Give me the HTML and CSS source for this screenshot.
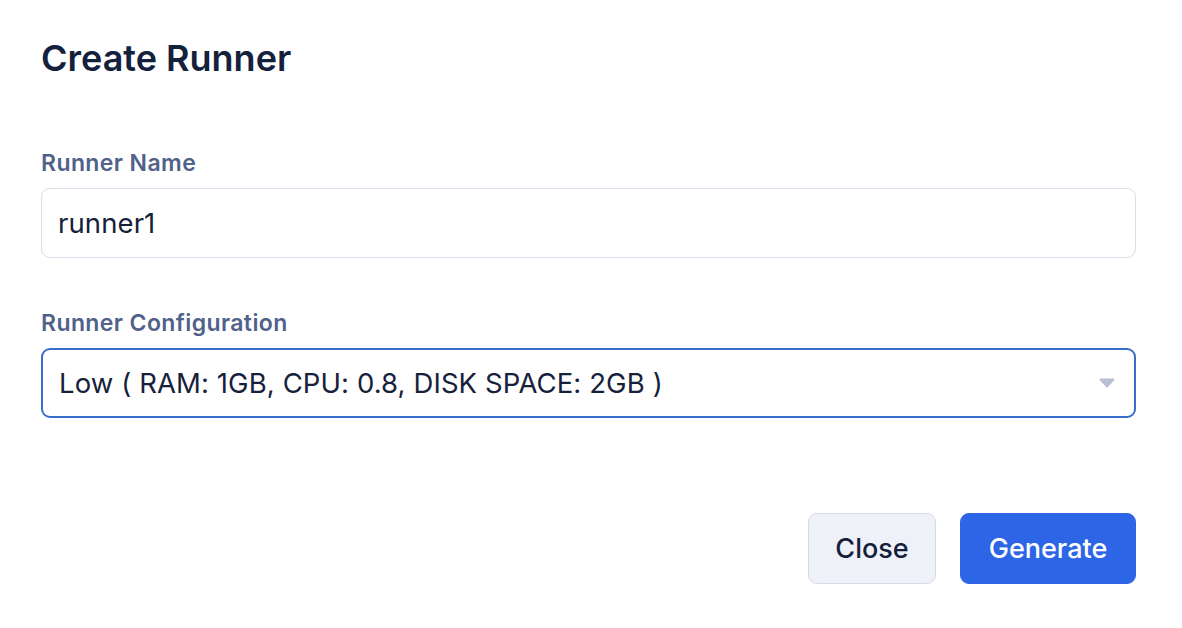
FILE: index.html
```html
<!DOCTYPE html>
<html lang="en">
<head>
<meta charset="utf-8">
<title>Create Runner</title>
<link rel="stylesheet" href="styles.css">
</head>
<body>
<div class="modal">
  <h1 class="title">Create Runner</h1>
  <form class="form">
    <div class="field">
      <label class="label" for="name">Runner Name</label>
      <input class="input" id="name" type="text" value="runner1">
    </div>
    <div class="field field-config">
      <label class="label" for="config">Runner Configuration</label>
      <div class="select-wrap">
        <select class="select" id="config">
          <option>Low ( RAM: 1GB, CPU: 0.8, DISK SPACE: 2GB )</option>
        </select>
        <svg class="caret" width="16" height="10" viewBox="0 0 16 10" aria-hidden="true">
          <path d="M1.6 0.5 H14.4 a1.1 1.1 0 0 1 0.8 1.8 L8.9 9.1 a1.2 1.2 0 0 1 -1.8 0 L0.8 2.3 A1.1 1.1 0 0 1 1.6 0.5 Z" fill="#b9c0d1"/>
        </svg>
      </div>
    </div>
    <div class="actions">
      <button type="button" class="btn btn-secondary">Close</button>
      <button type="button" class="btn btn-primary">Generate</button>
    </div>
  </form>
</div>
</body>
</html>
```

FILE: styles.css
```css
* { box-sizing: border-box; }

html, body {
  margin: 0;
  padding: 0;
  background: #ffffff;
}

body {
  font-family: Inter, "Noto Sans", "Liberation Sans", sans-serif;
  color: #131f3c;
}

.modal {
  width: 1182px;
  height: 628px;
  padding: 34px 46px 0 41px;
}

.title {
  margin: 0;
  font-size: 36px;
  line-height: 48px;
  font-weight: 600;
  color: #14213d;
  letter-spacing: 0;
}

.form {
  margin-top: 66px;
}

.field {
  display: flex;
  flex-direction: column;
  gap: 10px;
}

.field-config {
  margin-top: 50px;
}

.label {
  font-size: 23px;
  line-height: 30px;
  font-weight: 600;
  color: #50628a;
  letter-spacing: 0.4px;
}

.input,
.select {
  width: 100%;
  height: 70px;
  margin: 0;
  padding: 0 16px;
  font-family: inherit;
  font-size: 27.5px;
  letter-spacing: 0.1px;
  color: #16213b;
  background: #ffffff;
  border: 1.5px solid #d8dde9;
  border-radius: 9px;
  outline: none;
}

.select-wrap {
  position: relative;
}

.select {
  appearance: none;
  -webkit-appearance: none;
  border-color: #3a6ccb;
  border-width: 2px;
  padding-left: 16px;
}

.caret {
  position: absolute;
  right: 21px;
  top: 30px;
  pointer-events: none;
}

.actions {
  display: flex;
  justify-content: flex-end;
  gap: 24px;
  margin-top: 95px;
}

.btn {
  height: 71px;
  padding: 0;
  font-family: inherit;
  font-size: 27px;
  font-weight: 500;
  border-radius: 9px;
  cursor: pointer;
}

.btn-secondary {
  width: 128px;
  background: #eff1f9;
  border: 1.5px solid #d5dae8;
  color: #14203b;
}

.btn-primary {
  width: 176px;
  background: #2c66e7;
  border: 1.5px solid #2c66e7;
  color: #ffffff;
}
```
